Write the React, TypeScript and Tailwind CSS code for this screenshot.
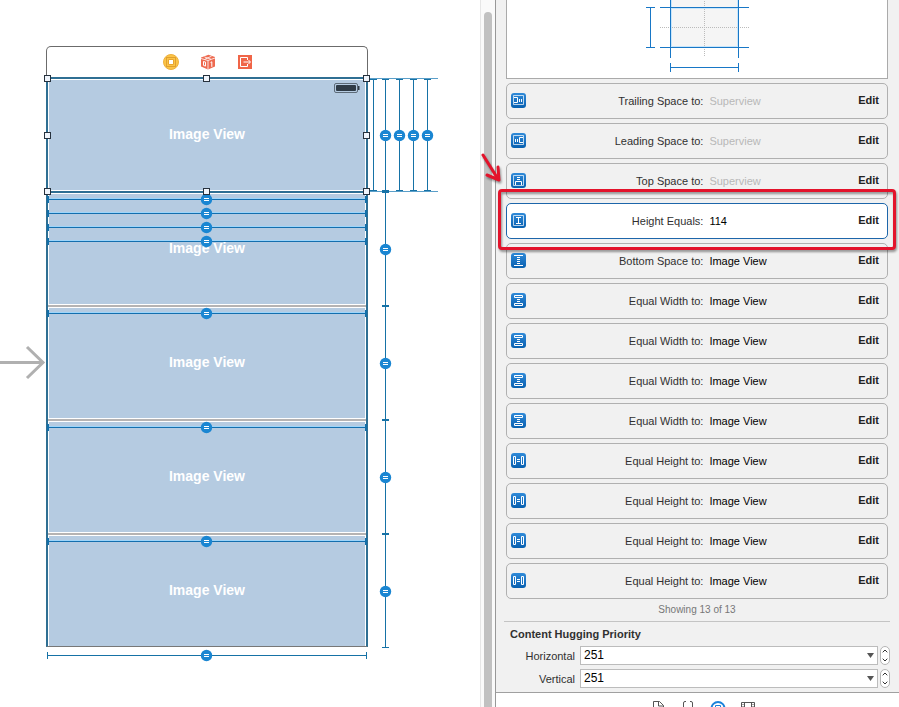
import React from "react";

type Kind = "trailing" | "leading" | "top" | "height" | "bottom" | "eqWidth" | "eqHeight";
type Row = { kind: Kind; label: string; value: string; muted?: boolean; selected?: boolean };

const rows: Row[] = [
  { kind: "trailing", label: "Trailing Space to:", value: "Superview", muted: true },
  { kind: "leading", label: "Leading Space to:", value: "Superview", muted: true },
  { kind: "top", label: "Top Space to:", value: "Superview", muted: true },
  { kind: "height", label: "Height Equals:", value: "114", selected: true },
  { kind: "bottom", label: "Bottom Space to:", value: "Image View" },
  { kind: "eqWidth", label: "Equal Width to:", value: "Image View" },
  { kind: "eqWidth", label: "Equal Width to:", value: "Image View" },
  { kind: "eqWidth", label: "Equal Width to:", value: "Image View" },
  { kind: "eqWidth", label: "Equal Width to:", value: "Image View" },
  { kind: "eqHeight", label: "Equal Height to:", value: "Image View" },
  { kind: "eqHeight", label: "Equal Height to:", value: "Image View" },
  { kind: "eqHeight", label: "Equal Height to:", value: "Image View" },
  { kind: "eqHeight", label: "Equal Height to:", value: "Image View" },
];

const glyphs: Record<Kind, React.ReactNode> = {
  trailing: (
    <>
      <path d="M2.500 2.500h10v9h-10z" opacity=".7" />
      <path d="M3 4.500h3.500v5H3M8.500 6v3M10.500 6v3" />
    </>
  ),
  leading: (
    <>
      <path d="M2.500 2.500h10v9h-10z" opacity=".7" />
      <path d="M12 4.500H8.500v5H12M4.500 6v3M6.500 6v3" />
    </>
  ),
  top: (
    <>
      <path d="M2.500 2.500h10v10h-10z" opacity=".7" />
      <path d="M4.500 12V8.500h6V12M6 4.500h3M6 6.500h3" />
    </>
  ),
  height: (
    <>
      <path d="M2.500 2.500h10v10h-10z" opacity=".7" />
      <path d="M5 4.500h5M5 10.500h5M7.500 4.500v6" />
    </>
  ),
  bottom: <path d="M3 2.500h9M3 12.500h9M6 4.500h3M6 6.500h3M6 8.500h3M6 10.500h3" />,
  eqWidth: <path d="M3.500 2.500h8v2h-8zM3.500 10.500h8v2h-8zM6 6.500h3M6 8.500h3" />,
  eqHeight: <path d="M2.500 3.500h2v8h-2zM10.500 3.500h2v8h-2zM6 6.500h3M6 8.500h3" />,
};

function ConstraintIcon({ kind }: { kind: Kind }) {
  return (
    <span className="mb-0.5 block size-[15px] rounded-[3px] bg-linear-to-b from-[#2f8ad8] to-[#0660b0]">
      <svg viewBox="0 0 15 15" className="size-[15px]" fill="none" stroke="#fff" aria-hidden="true">
        {glyphs[kind]}
      </svg>
    </span>
  );
}

function Callout() {
  return (
    <>
      <div className="pointer-events-none absolute -inset-x-[9px] -top-[15px] -bottom-[12px] z-10 rounded-[4px] border-3 border-[#e3132b] drop-shadow-[1px_2px_1px_rgba(0,0,0,0.4)]" />
      <svg
        className="pointer-events-none absolute -top-[53px] -left-[27px] z-10 h-[34px] w-[24px] overflow-visible drop-shadow-[1px_2px_1px_rgba(0,0,0,0.4)]"
        viewBox="0 0 24 34"
        fill="none"
        stroke="#e3132b"
        strokeWidth="3"
        strokeLinecap="round"
        strokeLinejoin="round"
        aria-hidden="true"
      >
        <path d="M3 4 18 28M7 24l12 5-1-13" />
      </svg>
    </>
  );
}

function ConstraintRow({ row }: { row: Row }) {
  return (
    <li
      className={
        row.selected
          ? "relative grid h-9 grid-cols-[15px_6fr_5fr_auto] items-center gap-x-1.5 rounded-[5px] border border-[#1d66aa] bg-white pr-2 pl-1"
          : "grid h-9 grid-cols-[15px_6fr_5fr_auto] items-center gap-x-1.5 rounded-[5px] border border-[#b0b0b0] pr-2 pl-1"
      }
    >
      <ConstraintIcon kind={row.kind} />
      <span className="text-right text-[#303030]">{row.label}</span>
      <span className={row.muted ? "text-[#b8b8b8]" : "text-black"}>{row.value}</span>
      <button className="pb-0.5 font-bold text-[#222]">Edit</button>
      {row.selected && <Callout />}
    </li>
  );
}

function SpacingDiagram() {
  return (
    <div className="flex h-[79px] shrink-0 justify-center border border-t-0 border-[#aaa] bg-white">
      <svg width="120" height="78" viewBox="637 0 120 78" fill="none" stroke="#1877c6" aria-hidden="true">
        <path d="M670 0h69v48h-69z" fill="#f5f5f5" stroke="none" />
        <path d="M671.500 0V46.500H737.500V0M671.500 8.500h66" stroke="#c9e6fb" />
        <path d="M704.500 1v56M660 27.500h89" stroke="#bbb" strokeDasharray="1 1" />
        <path d="M670.500 0v58M738.500 0v58M660 7.500h89M660 47.500h89" />
        <path d="M650.500 7v41M646 7.500h9M646 47.500h9M670 67.500h69M670.500 63v9M738.500 63v9" />
      </svg>
    </div>
  );
}

function PriorityField({ id, label }: { id: string; label: string }) {
  return (
    <div className="flex items-center">
      <label htmlFor={id} className="w-[71px] shrink-0 text-right text-[#303030]">
        {label}
      </label>
      <div className="relative ml-[5px] flex flex-1">
        <select
          id={id}
          defaultValue="251"
          className="h-[19px] w-full appearance-none border border-[#bcbcbc] bg-white px-[3px] text-[12px] leading-[17px] text-black"
        >
          <option>251</option>
          <option>250</option>
        </select>
        <svg className="pointer-events-none absolute top-[7px] right-1 h-[5px] w-[7px]" viewBox="0 0 7 5" aria-hidden="true">
          <path d="M0 0h7L3.500 5z" fill="#555" />
        </svg>
      </div>
      <div className="ml-0.5 flex h-[19px] w-[10px] flex-col rounded-[5px] border border-[#b5b5b5] bg-white">
        <button aria-label={`Increase ${label}`} className="flex flex-1 items-center justify-center">
          <svg width="6" height="4" viewBox="0 0 6 4" fill="none" stroke="#333"><path d="M.7 3.300 3 1 5.300 3.300" /></svg>
        </button>
        <button aria-label={`Decrease ${label}`} className="flex flex-1 items-center justify-center">
          <svg width="6" height="4" viewBox="0 0 6 4" fill="none" stroke="#333"><path d="M.7.7 3 3 5.300.7" /></svg>
        </button>
      </div>
    </div>
  );
}

function LibraryBar() {
  return (
    <nav className="flex h-[30px] shrink-0 items-start justify-center gap-3.5 border-t border-[#a0a0a0] bg-white pt-2 pl-[11px]">
      <button aria-label="File templates">
        <svg width="16" height="16" viewBox="0 0 16 16" fill="none" stroke="#555"><path d="M3.500.5h6l4 4v11h-10zM8.500.5v4.500h5" /></svg>
      </button>
      <button aria-label="Code snippets">
        <svg width="16" height="16" viewBox="0 0 16 16" fill="none" stroke="#555"><path d="M6 .5H5q-1.500 0-1.500 1.500v4L2 7.500 3.500 9v4q0 1.500 1.500 1.500h1M10 .5h1q1.500 0 1.500 1.500v4L14 7.500 12.500 9v4q0 1.500-1.500 1.500h-1" /></svg>
      </button>
      <button aria-label="Object library">
        <svg width="16" height="16" viewBox="0 0 16 16" fill="none" stroke="#1a82da"><circle cx="8" cy="7.500" r="6.500" strokeWidth="2" /><path d="M5.500 4.500h5v5h-5z" /></svg>
      </button>
      <button aria-label="Media library">
        <svg width="16" height="16" viewBox="0 0 16 16" fill="none" stroke="#555"><path d="M1.500 1.500h13v12h-13zM4.500 1.500v12M11.500 1.500v12M4.500 7.500h7" /><path d="M3 3v10M13 3v10" strokeDasharray="1 1" /></svg>
      </button>
    </nav>
  );
}

function Equals({ x, y }: { x: number; y: number }) {
  return (
    <g>
      <circle cx={x} cy={y} r="5.700" fill="#1a86d2" />
      <path d={`M${x - 2.5} ${y - 1}h5M${x - 2.5} ${y + 1}h5`} stroke="#fff" />
    </g>
  );
}

const widthLines = [199.5, 213.5, 227.5, 241.5, 313.5, 427.5, 541.5];
const heightLines = [385.5, 399.5, 413.5, 427.5];
const gapCenters = [249.5, 363.5, 477.5, 591.5];
const handles = [
  [47.5, 78.5], [206.5, 78.5], [366.5, 78.5], [47.5, 135.5],
  [366.5, 135.5], [47.5, 191.5], [206.5, 191.5], [366.5, 191.5],
];

/* Constraint lines, selection handles and the entry arrow drawn over the scene. */
function CanvasOverlay() {
  return (
    <svg className="pointer-events-none absolute top-0 left-0 h-[707px] w-[480px]" viewBox="0 0 480 707" fill="none" aria-hidden="true">
      <path d="M0 362.500h43M27 347l16 15.500L27 378" stroke="#b0b0b0" strokeWidth="3" />
      {widthLines.map((y) => (
        <g key={y}>
          <path d={`M49 ${y - 1}H365`} stroke="#9dd5fa" />
          <path d={`M48 ${y}H366`} stroke="#146fae" />
          <path d={`M48 ${y - 3.5}v7M366 ${y - 3.5}v7`} stroke="#146fa8" strokeWidth="2" />
          <Equals x={206.5} y={y} />
        </g>
      ))}
      <path d="M368 78.500h70M368 191.500h70" stroke="#5b9fc9" />
      <path d="M373.500 79v112M370 79.500h7M370 190.500h7" stroke="#1672a6" />
      {heightLines.map((x) => (
        <g key={x}>
          <path d={`M${x} 79v112M${x - 3.5} 79.500h7M${x - 3.5} 190.500h7`} stroke="#1672a6" />
          <Equals x={x} y={135.5} />
        </g>
      ))}
      <path d="M385.500 191v456M382 647.500h7" stroke="#1672a6" />
      <path d="M382 192h7M382 306h7M382 420h7M382 534h7" stroke="#1672a6" strokeWidth="2" />
      {gapCenters.map((y) => (
        <Equals key={y} x={385.5} y={y} />
      ))}
      <path d="M47 655.500h320M47.500 652v7M366.500 652v7" stroke="#1672a6" />
      <Equals x={206.5} y={655.5} />
      {handles.map(([x, y]) => (
        <rect key={`${x}-${y}`} x={x - 3} y={y - 3} width="6" height="6" fill="#f0f5fc" stroke="#26313d" />
      ))}
    </svg>
  );
}

function ImageViewCell({ index }: { index: number }) {
  return (
    <div
      className={
        index < 2
          ? "h-[114px] border-t-2 border-[#2f6f93] bg-[#b5cbe1]"
          : "h-[114px] border-t-2 border-[#b5b3b3] bg-[#b5cbe1]"
      }
    >
      <div className="relative flex h-full items-center justify-center border border-white text-[14px] font-bold text-white">
        <span className="pb-0.5">Image View</span>
        {index === 0 && (
          <svg className="absolute top-[3px] right-[5px]" width="26" height="11" viewBox="0 0 26 11" aria-hidden="true">
            <rect x=".5" y=".5" width="23" height="9" rx="1.500" fill="none" stroke="#5d6b78" />
            <rect x="2" y="2" width="20" height="6" rx="1" fill="#2f3b46" />
            <path d="M24 3h1.500v4H24z" fill="#2f3b46" />
          </svg>
        )}
      </div>
    </div>
  );
}

function Scene() {
  return (
    <div className="w-[322px]">
      <div className="flex h-[31px] items-center justify-center gap-[21px] rounded-t-[5px] border border-b-0 border-[#6b6b6b] bg-white pl-0.5">
        <svg width="16" height="16" viewBox="0 0 16 16" aria-hidden="true">
          <circle cx="8" cy="8" r="7.500" fill="#fbc447" stroke="#eeb03c" />
          <rect x="3.500" y="3.500" width="9" height="9" fill="none" stroke="#e0a030" />
          <path d="M5.500 5.500h5v5h-5z" fill="#fff" stroke="#e9a52e" />
        </svg>
        <svg width="16" height="16" viewBox="0 0 16 16" aria-hidden="true">
          <path d="M1 3.500 8.500.8 15 3v9.500L8 15.500 1 12.500z" fill="#ee6a50" />
          <path d="M1 4.500 8 6.500l7-2.500M8 6.500v9M4.500 3l6.500 2.200M5 5.200l6.500-3" stroke="#fff" strokeWidth=".8" fill="none" />
          <path d="M3.500 7.500l2 .6v4l-2-.7zM10.500 8.600l1.300-.8v5" stroke="#fff" fill="none" />
        </svg>
        <svg width="16" height="16" viewBox="0 0 16 16" aria-hidden="true">
          <path d="M1 1h14v14H1z" fill="#f06548" />
          <path d="M10.500 6V3.500h-7v9h7V10M6.500 8H13M11.500 6l2 2-2 2" fill="none" stroke="#fff" />
        </svg>
      </div>
      <div className="flex h-[570px] flex-col overflow-hidden border-x-2 border-b border-x-[#2f6f93] border-b-[#777] *:shrink-0">
        {[0, 1, 2, 3, 4].map((i) => (
          <ImageViewCell key={i} index={i} />
        ))}
      </div>
    </div>
  );
}

export default function App() {
  return (
    <div className="flex h-screen overflow-hidden bg-white font-['Liberation_Sans',Arial,sans-serif] text-[11px] leading-[14px]">
      <main className="relative min-w-0 flex-1 overflow-hidden pt-[46px] pl-[46px]">
        <Scene />
        <CanvasOverlay />
      </main>
      <div className="flex w-[15px] shrink-0 flex-col border-l border-[#e6e6e6] bg-[#fafafa] pt-3 pl-[3px]">
        <div className="w-2 flex-1 rounded-t-full bg-[#c1c1c1]" />
      </div>
      <aside className="flex w-[404px] shrink-0 flex-col border-l border-[#989898] bg-[#f1f1f1]">
        <section className="flex flex-col pr-[11px] pl-2.5">
          <SpacingDiagram />
          <ul className="mt-1 flex flex-col gap-1">
            {rows.map((row, i) => (
              <ConstraintRow key={i} row={row} />
            ))}
          </ul>
          <p className="mt-1 pb-1 text-center text-[10px] text-[#777]">Showing 13 of 13</p>
        </section>
        <section className="mr-[9px] ml-2 flex-1 border-t border-[#c4c4c4] pt-[5px]">
          <h2 className="ml-1.5 font-bold text-[#303030]">Content Hugging Priority</h2>
          <div className="mt-[5px] flex flex-col gap-1">
            <PriorityField id="hugging-horizontal" label="Horizontal" />
            <PriorityField id="hugging-vertical" label="Vertical" />
          </div>
        </section>
        <div className="h-[15px] shrink-0 overflow-hidden">
          <LibraryBar />
        </div>
      </aside>
    </div>
  );
}
